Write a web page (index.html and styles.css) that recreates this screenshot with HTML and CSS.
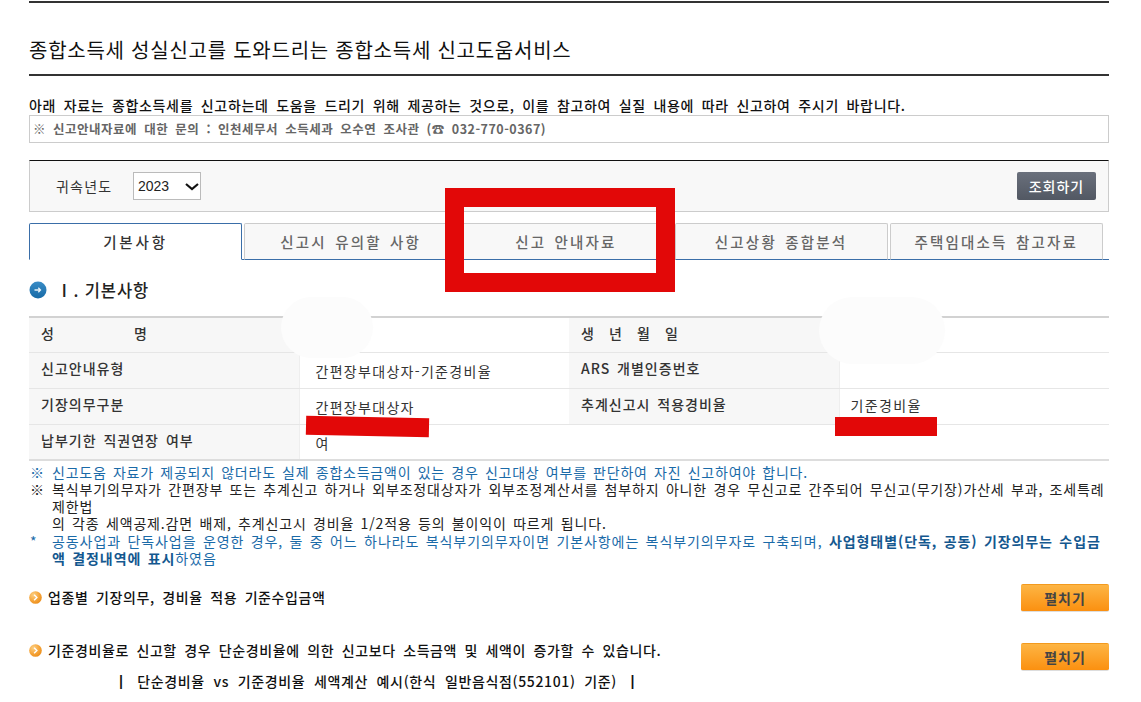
FILE: index.html
```html
<!DOCTYPE html>
<html lang="ko">
<head>
<meta charset="utf-8">
<title>신고도움서비스</title>
<link rel="stylesheet" href="styles.css">
</head>
<body>
<svg class="defs" width="0" height="0"><defs>
  <radialGradient id="orange" cx="35%" cy="30%" r="80%"><stop offset="0" stop-color="#fcd084"/><stop offset="0.55" stop-color="#f6a63c"/><stop offset="1" stop-color="#ea8a14"/></radialGradient>
  <linearGradient id="blue" x1="0" y1="0" x2="0" y2="1"><stop offset="0" stop-color="#3a8cc6"/><stop offset="1" stop-color="#166aa6"/></linearGradient>
</defs></svg>
<main class="page">
  <header class="title-bar"><h1>종합소득세 성실신고를 도와드리는 종합소득세 신고도움서비스</h1></header>
  <p class="lead">아래 자료는 종합소득세를 신고하는데 도움을 드리기 위해 제공하는 것으로, 이를 참고하여 실질 내용에 따라 신고하여 주시기 바랍니다.</p>
  <p class="contact">※ 신고안내자료에 대한 문의 : 인천세무서 소득세과 오수연 조사관 (☎ 032-770-0367)</p>
  <form class="filter">
    <label class="filter-label" for="year">귀속년도</label>
    <select id="year" class="year"><option>2023</option></select>
    <button type="button" class="search">조회하기</button>
  </form>
  <nav class="tabs">
    <a class="tab active">기본사항</a>
    <a class="tab">신고시 유의할 사항</a>
    <a class="tab">신고 안내자료</a>
    <a class="tab">신고상황 종합분석</a>
    <a class="tab">주택임대소득 참고자료</a>
  </nav>
  <h2 class="section"><svg class="ico" viewBox="0 0 18 18"><circle cx="9" cy="9" r="8.5" fill="url(#blue)"/><path d="M5.500 9h6M9.300 6.800 11.500 9l-2.200 2.200" fill="none" stroke="#e8f2f8" stroke-width="1.300"/></svg><span>Ⅰ. 기본사항</span></h2>
  <table class="info">
    <tr class="head"><th class="spread"><span>성</span><span>명</span></th><td></td><th class="spread wide"><span>생</span><span>년</span><span>월</span><span>일</span></th><td></td></tr>
    <tr><th>신고안내유형</th><td class="low">간편장부대상자-기준경비율</td><th>ARS 개별인증번호</th><td></td></tr>
    <tr><th>기장의무구분</th><td class="low">간편장부대상자</td><th>추계신고시 적용경비율</th><td class="right">기준경비율</td></tr>
    <tr><th>납부기한 직권연장 여부</th><td colspan="3" class="low">여</td></tr>
  </table>
  <ul class="notes">
    <li class="blue"><i>※</i><span>신고도움 자료가 제공되지 않더라도 실제 종합소득금액이 있는 경우 신고대상 여부를 판단하여 자진 신고하여야 합니다.</span></li>
    <li><i>※</i><span>복식부기의무자가 간편장부 또는 추계신고 하거나 외부조정대상자가 외부조정계산서를 첨부하지 아니한 경우 무신고로 간주되어 무신고(무기장)가산세 부과, 조세특례<br>제한법<br>의 각종 세액공제.감면 배제, 추계신고시 경비율 1/2적용 등의 불이익이 따르게 됩니다.</span></li>
    <li class="blue"><i>*</i><span>공동사업과 단독사업을 운영한 경우, 둘 중 어느 하나라도 복식부기의무자이면 기본사항에는 복식부기의무자로 구축되며, <b>사업형태별(단독, 공동) 기장의무는 수입금<br>액 결정내역에 표시</b>하였음</span></li>
  </ul>
  <section class="acc first">
    <h3><svg class="dot" viewBox="0 0 14 14"><circle cx="7" cy="7" r="6.800" fill="url(#orange)"/><path d="M5.500 4 8.500 7l-3 3" fill="none" stroke="#fff" stroke-width="1.500"/></svg>업종별 기장의무, 경비율 적용 기준수입금액</h3>
    <button type="button" class="open">펼치기</button>
  </section>
  <section class="acc second">
    <h3><svg class="dot" viewBox="0 0 14 14"><circle cx="7" cy="7" r="6.800" fill="url(#orange)"/><path d="M5.500 4 8.500 7l-3 3" fill="none" stroke="#fff" stroke-width="1.500"/></svg>기준경비율로 신고할 경우 단순경비율에 의한 신고보다 소득금액 및 세액이 증가할 수 있습니다.</h3>
    <button type="button" class="open">펼치기</button>
  </section>
  <p class="example">┃ 단순경비율 vs 기준경비율 세액계산 예시(한식 일반음식점(552101) 기준) ┃</p>
</main>
<div class="mark frame"></div>
<div class="mark blob b1"></div>
<div class="mark blob b2"></div>
<div class="mark line l1"></div>
<div class="mark line l2"></div>
</body>
</html>
```
FILE: styles.css
```css
html, body { margin: 0; height: 702px; overflow: hidden; background: #fff; }
body { font-family: "Noto Sans CJK KR", "Noto Sans", sans-serif; color: #222; font-size: 14px; position: relative; }
.defs { position: absolute; }
.page { width: 1080px; margin-left: 29px; padding-top: 1px; }
.title-bar { border-top: 2px solid #333; border-bottom: 2px solid #333; height: 71px; display: flex; align-items: center; }
h1 { margin: 0; padding-top: 22px; font-size: 20px; font-weight: 400; color: #111; letter-spacing: 0.75px; line-height: 24px; white-space: nowrap; }
.lead { margin: 19px 0 0; font-size: 14px; font-weight: 500; color: #111; line-height: 20px; height: 20px; letter-spacing: 0.65px; word-spacing: 3.1px; white-space: nowrap; }
.contact { margin: 0; height: 26px; border: 1px solid #ccc; line-height: 26px; padding-left: 3px; font-size: 12.500px; font-weight: 700; color: #666; letter-spacing: 0.5px; word-spacing: 3.100px; white-space: nowrap; }
.filter { margin-top: 17px; height: 50px; border: 1px solid #ccc; border-top-color: #111; background: #f8f8f8; display: flex; align-items: center; }
.filter-label { margin-left: 26px; width: 77px; font-size: 14px; letter-spacing: 1.2px; color: #333; }
.year { appearance: none; width: 68px; height: 28px; border: 1px solid #bbb; background: #fff url("data:image/svg+xml,%3Csvg xmlns='http://www.w3.org/2000/svg' width='14' height='8'%3E%3Cpath d='M1 1l6 5 6-5' fill='none' stroke='%23111' stroke-width='2.200'/%3E%3C/svg%3E") no-repeat 51px 10px; font-family: "Liberation Sans", sans-serif; font-size: 14px; color: #222; padding: 0 0 0 4px; }
.search { margin-left: auto; margin-right: 12px; width: 79px; height: 28px; border: 0; border-radius: 2px; background: linear-gradient(#6a707c, #525863); color: #fff; font: 500 14px "Noto Sans CJK KR", sans-serif; letter-spacing: 1px; padding: 0; }
.tabs { margin-top: 10px; height: 37px; display: flex; gap: 2.200px; border-bottom: 1px solid #3a6ea8; align-items: flex-end; }
.tab { box-sizing: border-box; width: 213px; height: 37px; margin-bottom: -1px; border: 1px solid #ccc; border-bottom: 1px solid #3a6ea8; border-radius: 2px 2px 0 0; background: #f8f8f8; color: #666; font-size: 14.500px; letter-spacing: 2.200px; word-spacing: 2px; font-weight: 500; display: flex; align-items: center; justify-content: center; }
.tab.active { background: #fff; color: #333; border-color: #3a6ea8; border-bottom-color: #fff; letter-spacing: 2.800px; }
.section { margin: 18px 0 0; height: 24px; display: flex; align-items: center; gap: 9px; font-size: 16.500px; letter-spacing: 0.9px; font-weight: 500; color: #222; }
.ico { width: 18px; height: 18px; flex: none; }
.info { margin-top: 14px; width: 1080px; border-collapse: collapse; table-layout: fixed; border-top: 2px solid #d2d2d2; border-bottom: 2px solid #ddd; }
.info tr { height: 36px; }
.info tr.head { height: 35px; }
.info th, .info td { box-sizing: border-box; width: 270px; border-bottom: 1px solid #e6e6e6; padding: 0; font-size: 14px; letter-spacing: 1px; word-spacing: 2px; }
.info tr:last-child th, .info tr:last-child td { border-bottom: 0; }
.info th { padding: 0 0 4px 12px; background: #f7f7f7; text-align: left; font-weight: 500; color: #333; border-right: 1px solid #eee; }
.info th + td + th { padding-left: 12px; }
.info td { padding: 0 0 0 16px; color: #333; font-weight: 400; letter-spacing: 1.300px; }
.info td.right { padding-left: 11px; padding-bottom: 3px; letter-spacing: 1.400px; }
.info td.low { padding-top: 2px; }
.spread span { display: inline-block; width: 93px; }
.spread.wide span { width: 28px; }
.notes { list-style: none; margin: 3px 0 0; padding: 0; font-size: 14px; line-height: 17px; color: #222; letter-spacing: 0.85px; word-spacing: 1.600px; white-space: nowrap; }
.notes li { display: flex; }
.notes li:first-child { letter-spacing: 0.78px; }
.notes i { flex: none; width: 23px; font-style: normal; padding-left: 1px; box-sizing: border-box; }
.notes .blue { color: #1a6aa8; }
.notes b { font-weight: 700; color: #14588f; }
.notes li:last-child { margin-top: 1px; letter-spacing: 0.92px; }
.acc { display: flex; justify-content: space-between; align-items: flex-start; }
.acc.first { margin-top: 17px; }
.acc.second { margin-top: 31px; }
.acc h3 { margin: 3px 0 0; font-size: 14px; font-weight: 500; color: #111; display: flex; align-items: center; gap: 6px; line-height: 20px; letter-spacing: 0.6px; word-spacing: 3px; white-space: nowrap; }
.acc.second h3 { margin-top: -3px; }
.dot { width: 13px; height: 13px; flex: none; }
.open { width: 88px; height: 28px; border: 0; border-bottom: 1px solid #ddd; border-top: 1px solid #f39a1e; border-radius: 2px; background: linear-gradient(#fdb544, #fb9010); color: #444; font: 700 14px "Noto Sans CJK KR", sans-serif; letter-spacing: 0.9px; padding: 0; }
.example { margin: 0; padding: 0 0 0 85px; font-size: 14px; font-weight: 500; color: #111; line-height: 20px; letter-spacing: 0.65px; word-spacing: 4px; white-space: nowrap; }
.mark { position: absolute; }
.frame { left: 445px; top: 188px; width: 192px; height: 66px; border: 19px solid #e20808; }
.blob { background: #fcfcfc; }
.b1 { left: 281px; top: 297px; width: 92px; height: 61px; border-radius: 46px; }
.b2 { left: 819px; top: 297px; width: 126px; height: 67px; border-radius: 50px; }
.line { background: #e20808; }
.l1 { left: 306px; top: 417px; width: 123px; height: 19px; transform: rotate(1.200deg); }
.l2 { left: 835px; top: 417px; width: 102px; height: 19px; }
```
